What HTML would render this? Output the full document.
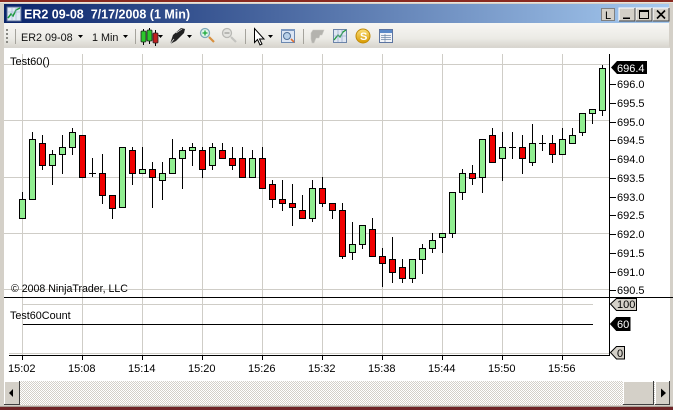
<!DOCTYPE html>
<html><head><meta charset="utf-8"><style>
html,body{margin:0;padding:0;background:#d4d0c8;width:673px;height:410px;overflow:hidden}
svg{display:block;font-family:"Liberation Sans",sans-serif;font-size:11px}
</style></head><body>
<svg width="673" height="410" viewBox="0 0 673 410" xmlns="http://www.w3.org/2000/svg">
<defs>
<linearGradient id="t" x1="0" x2="1" y1="0" y2="0"><stop offset="0" stop-color="#0a246a"/><stop offset="1" stop-color="#a6caf0"/></linearGradient>
<linearGradient id="b" x1="0" x2="0" y1="0" y2="1"><stop offset="0" stop-color="#f7f6f3"/><stop offset=".6" stop-color="#ecebe6"/><stop offset="1" stop-color="#d6d3cc"/></linearGradient>
<linearGradient id="c" x1="0" x2="0" y1="0" y2="1"><stop offset="0" stop-color="#fbe07a"/><stop offset="1" stop-color="#d89a00"/></linearGradient>
<pattern id="d" width="2" height="2" patternUnits="userSpaceOnUse"><rect width="2" height="2" fill="#fff"/><rect width="1" height="1" fill="#d4d0c8"/><rect x="1" y="1" width="1" height="1" fill="#d4d0c8"/></pattern>
</defs>
<rect width="673" height="410" fill="#d4d0c8"/>
<rect width="673" height="2" fill="#8a2a20"/><rect y="2" width="673" height="1" fill="#e8e4dc"/>
<rect y="407" width="673" height="3" fill="#6e2426"/><rect y="406" width="673" height="1" fill="#a89c94"/>
<rect x="4" y="4" width="665" height="19" fill="url(#t)"/>
<!-- title icon -->
<rect x="7" y="7" width="14" height="14" fill="#dfe8f4" stroke="#5a6e96"/>
<path d="M8 18l3-4 2 2 3-6 4-2" fill="none" stroke="#189a38" stroke-width="1.5"/><path d="M8 12h12M12 8v12M16 8v12" stroke="#9ab0d0" stroke-width=".6"/>
<text x="24" y="18.500" fill="#fff" font-weight="bold" font-size="12.500" xml:space="preserve">ER2 09-08  7/17/2008 (1 Min)</text>
<!-- window buttons -->
<rect x="601.5" y="8.5" width="13" height="12" fill="#d4d0c8" stroke="#808080"/><text x="605" y="19" fill="#000" font-size="11">L</text>
<g fill="#d4d0c8"><rect x="619" y="8" width="16" height="13"/><rect x="636" y="8" width="16" height="13"/><rect x="653" y="8" width="16" height="13"/></g>
<path d="M619 21V8h16M636 21V8h16M653 21V8h16" fill="none" stroke="#fff"/>
<path d="M619 21h16V8M636 21h16V8M653 21h16V8" fill="none" stroke="#404040"/>
<path d="M623 17.5h7v1.500h-7z" fill="#000"/>
<path d="M639.500 10.500h9v8h-9zM639.500 11.500h9" fill="none" stroke="#000"/>
<path d="M657 10.500l8 8M665 10.500l-8 8" stroke="#000" stroke-width="1.600"/>
<!-- toolbar -->
<rect x="4" y="23" width="665" height="25" fill="url(#b)"/>
<path d="M6 29h2v2H6zM6 33h2v2H6zM6 37h2v2H6zM6 41h2v2H6z" fill="#8a8a84"/>
<path d="M15.500 29v15M135.500 29v15M245.500 29v15M303.500 29v15" stroke="#a5a39c"/>
<text x="21" y="41" font-size="10.800" fill="#111">ER2 09-08</text>
<path d="M78 35h5l-2.500 3zM123 35h5l-2.500 3zM158 35h5l-2.500 3zM187 35h5l-2.500 3zM268 35h5l-2.500 3z" fill="#000"/>
<text x="92" y="41" font-size="10.800" fill="#111">1 Min</text>
<path d="M143.500 29v16M149.500 28v16M155.500 30v16" stroke="#000"/>
<rect x="141" y="31" width="5" height="11" rx="1" fill="#2cc62c" stroke="#222" stroke-width=".8"/>
<rect x="147" y="30" width="5" height="11" rx="1" fill="#2cc62c" stroke="#222" stroke-width=".8"/>
<rect x="153" y="33" width="5" height="10" rx="1" fill="#c02020" stroke="#222" stroke-width=".8"/>
<path d="M170 44l3-9 8-7 4 1-1 4-8 8z" fill="#222"/><path d="M170 44l4-5M176 33l6-4" stroke="#eee" stroke-width=".7"/>
<circle cx="205" cy="33" r="4.500" fill="#dff5e8" stroke="#7fa8b8" stroke-width="1.300"/><path d="M202.500 33h5M205 30.500v5" stroke="#18a838" stroke-width="1.300"/><path d="M209 37l5 5" stroke="#d89040" stroke-width="2.200"/>
<circle cx="227" cy="33" r="4.500" fill="#e4e4e0" stroke="#b8b8b4" stroke-width="1.300"/><path d="M224.500 33h5" stroke="#a0a09c" stroke-width="1.300"/><path d="M231 37l5 5" stroke="#c4c4c0" stroke-width="2.200"/>
<path d="M254.500 28.500v14l3-3 2.500 5.500 2-1-2.500-5h4.500z" fill="#fff" stroke="#000"/>
<rect x="281.500" y="29.500" width="13" height="13" fill="#dce6f4" stroke="#6c88b0"/><rect x="281" y="29" width="14" height="2" fill="#7c98c0"/><circle cx="287" cy="36" r="3.500" fill="#b8d0e8" stroke="#507098"/><path d="M291 39l3 3" stroke="#e07030" stroke-width="1.600"/>
<path d="M311 33l2-3h11l-2 5h-2l-1 3h-3l-2 5h-2l-1-4z" fill="#b4b3ae" stroke="#c8c7c2" stroke-width=".6"/>
<rect x="333.500" y="29.500" width="13" height="13" fill="#dfe6f2" stroke="#6c84a8"/><path d="M334 40l4-5 2 2 3-5 3-2" fill="none" stroke="#1f9a3a" stroke-width="1.300"/><path d="M334 36h12M338 30v12M342 30v12" stroke="#8aa0c4" stroke-width=".6"/>
<circle cx="363" cy="36" r="7" fill="url(#c)" stroke="#c08a08"/><text x="360" y="40" font-size="11" font-weight="bold" fill="#fff">S</text>
<rect x="379.500" y="29.500" width="13" height="13" fill="#f2f4f8" stroke="#5c74a0"/><rect x="380" y="30" width="12" height="3" fill="#5a88c8"/><path d="M381 35.500h10M381 37.500h10M381 39.500h10M385 34v8" stroke="#7088a8" stroke-width=".7"/>
<!-- plot -->
<rect x="4" y="48" width="666" height="333" fill="#fff"/>
<path d="M4 47.500h666" stroke="#d8d6d0"/>
<g stroke="#cfcdc7">
<path d="M4 64.500h606M4 120.500h606M4 177.500h606M4 233.500h606M4 289.500h606M23 304.500h570M9 353.500h600"/>
<path d="M22.500 54v301M82.500 54v301M142.500 54v301M202.500 54v301M262.500 54v301M322.500 54v301M382.500 54v301M442.500 54v301M502.500 54v301M562.500 54v301"/>
</g>
<text x="10" y="65" fill="#000">Test60()</text>
<text x="11" y="292" fill="#000" font-size="10.600">© 2008 NinjaTrader, LLC</text>
<text x="10" y="319" fill="#000" font-size="10.800">Test60Count</text>
<!-- wicks -->
<path stroke="#000" fill="none" d="M22.500 192V219M32.500 132V199M42.500 135V170M52.500 150V185M62.500 135V174M72.500 128V155M82.500 135V177M92.500 158V177M102.500 154V204M112.500 195V219M122.500 147V207M132.500 147V185M142.500 147V173M152.500 162V208M162.500 162V200M172.500 139V173M182.500 147V189M192.500 143V166M202.500 147V178M212.500 143V170M222.500 143V158M232.500 147V170M242.500 147V177M252.500 150V177M262.500 147V188M272.500 180V208M282.500 180V211M292.500 184V226M302.500 195V218M312.500 180V222M322.500 177V207M332.500 203V219M342.500 203V259M352.500 222V260M362.500 225V249M372.500 218V256M382.500 248V287M392.500 237V283M402.500 259V283M412.500 259V283M422.500 244V274M432.500 233V253M442.500 233V253M452.500 192V238M462.500 169V200M472.500 165V185M482.500 139V193M492.500 128V162M502.500 132V181M512.500 132V159M522.500 135V174M532.500 124V166M542.500 135V151M552.500 135V163M562.500 128V154M572.500 128V143M582.500 113V136M592.500 109V124M602.500 65V116"/>
<path stroke="#000" d="M89 173.500h7M509 147.500h7M539 143.500h7"/>
<!-- green bodies -->
<path fill="#90ee90" stroke="#000" d="M19.500 199.500h6v19h-6zM29.500 139.500h6v60h-6zM49.500 154.500h6v11h-6zM59.500 147.500h6v7h-6zM69.500 132.500h6v15h-6zM119.500 147.500h6v60h-6zM139.500 169.500h6v4h-6zM159.500 173.500h6v7h-6zM169.500 158.500h6v15h-6zM179.500 150.500h6v8h-6zM189.500 147.500h6v3h-6zM209.500 147.500h6v18h-6zM249.500 158.500h6v19h-6zM309.500 188.500h6v30h-6zM349.500 244.500h6v8h-6zM359.500 225.500h6v19h-6zM409.500 259.500h6v19h-6zM419.500 248.500h6v11h-6zM429.500 240.500h6v8h-6zM439.500 233.500h6v4h-6zM449.500 192.500h6v41h-6zM459.500 173.500h6v19h-6zM479.500 139.500h6v38h-6zM499.500 147.500h6v11h-6zM529.500 143.500h6v19h-6zM559.500 139.500h6v15h-6zM569.500 135.500h6v8h-6zM579.500 113.500h6v19h-6zM589.500 109.500h6v4h-6zM599.500 68.500h6v42h-6z"/>
<!-- red bodies -->
<path fill="#f00000" stroke="#000" d="M39.500 143.500h6v22h-6zM79.500 135.500h6v42h-6zM99.500 173.500h6v22h-6zM109.500 195.500h6v13h-6zM129.500 150.500h6v23h-6zM149.500 169.500h6v8h-6zM199.500 150.500h6v19h-6zM219.500 150.500h6v8h-6zM229.500 158.500h6v7h-6zM239.500 158.500h6v19h-6zM259.500 158.500h6v30h-6zM269.500 184.500h6v15h-6zM279.500 199.500h6v4h-6zM289.500 203.500h6v4h-6zM299.500 210.500h6v8h-6zM319.500 188.500h6v15h-6zM329.500 203.500h6v7h-6zM339.500 210.500h6v46h-6zM369.500 229.500h6v27h-6zM379.500 256.500h6v7h-6zM389.500 259.500h6v13h-6zM399.500 267.500h6v11h-6zM469.500 173.500h6v5h-6zM489.500 135.500h6v27h-6zM519.500 147.500h6v11h-6zM549.500 143.500h6v11h-6z"/>
<!-- axes -->
<path stroke="#000" fill="none" d="M609.500 54v302M4 297.500h669M9 355.500h601M23 324.500h570"/>
<path stroke="#000" d="M610 84.500h6M610 103.500h6M610 122.500h6M610 140.500h6M610 159.500h6M610 178.500h6M610 197.500h6M610 215.500h6M610 234.500h6M610 253.500h6M610 272.500h6M610 290.500h6M22.500 355v5M82.500 355v5M142.500 355v5M202.500 355v5M262.500 355v5M322.500 355v5M382.500 355v5M442.500 355v5M502.500 355v5M562.500 355v5"/>
<g fill="#000">
<text x="617" y="88">696.0</text><text x="617" y="107">695.5</text><text x="617" y="126">695.0</text><text x="617" y="144">694.5</text><text x="617" y="163">694.0</text><text x="617" y="182">693.5</text><text x="617" y="201">693.0</text><text x="617" y="219">692.5</text><text x="617" y="238">692.0</text><text x="617" y="257">691.5</text><text x="617" y="276">691.0</text><text x="617" y="294">690.5</text>
<text x="8" y="372">15:02</text><text x="68" y="372">15:08</text><text x="128" y="372">15:14</text><text x="188" y="372">15:20</text><text x="248" y="372">15:26</text><text x="308" y="372">15:32</text><text x="368" y="372">15:38</text><text x="428" y="372">15:44</text><text x="488" y="372">15:50</text><text x="548" y="372">15:56</text>
</g>
<path d="M611 67.500l6-6.500h30v13h-30z" fill="#000"/><text x="617" y="72" fill="#fff">696.4</text>
<path d="M610.500 304l6-5.500h20v12h-20z" fill="#d4d0c8" stroke="#000"/><text x="617" y="308" fill="#000">100</text>
<path d="M610.500 324l6-6.500h13.500v13h-13.500z" fill="#000" stroke="#000"/><text x="617" y="328" fill="#fff">60</text>
<path d="M610.500 352.500l6-6h8v12.500h-8z" fill="#d4d0c8" stroke="#000"/><text x="617" y="357" fill="#000">0</text>
<!-- scrollbar -->
<rect x="4" y="381" width="666" height="24" fill="url(#d)"/>
<g fill="#d4d0c8"><rect x="4" y="381" width="16" height="24"/><rect x="623" y="381" width="31" height="24"/><rect x="655" y="381" width="15" height="24"/></g>
<path d="M4.500 405V381.500H19M623.500 405V381.500H653M655.500 405V381.500H669" fill="none" stroke="#fff"/>
<path d="M4 404.500h15.500V381M623 404.500h30.500V381M655 404.500h14.500V381" fill="none" stroke="#404040"/>
<path d="M9 393l4-4v8zM661 388.500l5 4.500-5 4.500z" fill="#000"/>
</svg>
</body></html>
